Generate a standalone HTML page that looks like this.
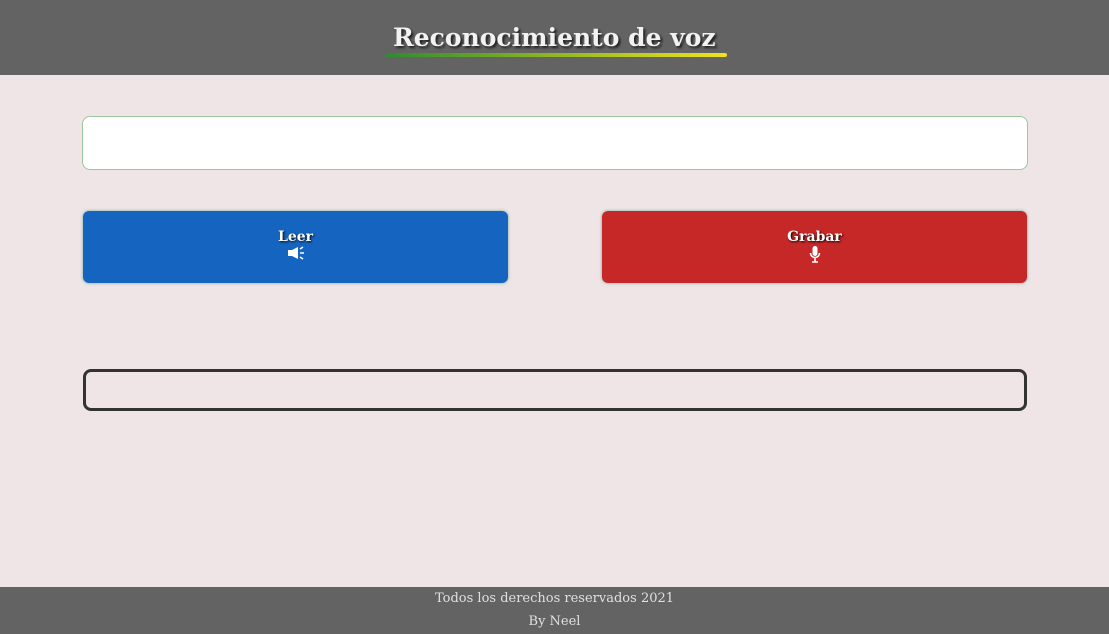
<!DOCTYPE html><html><head><style>
body{margin:0;width:1109px;height:634px;background:#efe5e6;font-family:"DejaVu Serif","Liberation Serif",serif;position:relative;overflow:hidden}
.hd{position:absolute;top:0;left:0;width:1109px;height:75px;background:#636363}
.t{position:absolute;left:393px;top:23px;font-size:25px;font-weight:bold;color:#f2f2f2;text-shadow:2px 2px 2px #222;white-space:nowrap}
.ul{position:absolute;left:385px;top:53px;width:342px;height:4px;background:linear-gradient(90deg,#2e8b2e,#f2e31a);border-radius:2px}
.in{position:absolute;left:82px;top:116px;width:944px;height:52px;background:#fff;border:1px solid #9cc79c;border-radius:8px}
.b{position:absolute;top:211px;width:425px;height:72px;border-radius:6px;color:#fff;font-weight:bold;font-size:14px;text-align:center;box-shadow:0 0 3px #7a9;text-shadow:1px 1px 2px #000}
.b span{display:block;margin-top:18px}
.out{position:absolute;left:83px;top:369px;width:938px;height:36px;border:3px solid #333;border-radius:8px}
.ft{position:absolute;left:0;top:587px;width:1109px;height:47px;background:#636363;color:#e0e0e0;font-size:13px;text-align:center;line-height:23px}
</style></head><body>
<div class="hd"><div class="t">Reconocimiento de voz</div><div class="ul"></div></div>
<div class="in"></div>
<div class="b" style="left:83px;background:#1565c0"><span>Leer</span>
<svg width="20" height="16" viewBox="0 0 20 16"><path d="M2 5h4l6-3v12l-6-3H2z" fill="#fff"/><path d="M14 4l3-2M14 8h4M14 12l3 2" stroke="#fff" stroke-width="1.6"/></svg></div>
<div class="b" style="left:602px;background:#c62828"><span>Grabar</span>
<svg width="14" height="18" viewBox="0 0 14 18"><rect x="4.5" y="1" width="5" height="10" rx="2.5" fill="#fff"/><path d="M2.5 8a4.5 4.5 0 0 0 9 0M7 13v4M4 17h6" stroke="#fff" stroke-width="1.6" fill="none"/></svg></div>
<div class="out"></div>
<div class="ft">Todos los derechos reservados 2021<br>By Neel</div>
</body></html>
